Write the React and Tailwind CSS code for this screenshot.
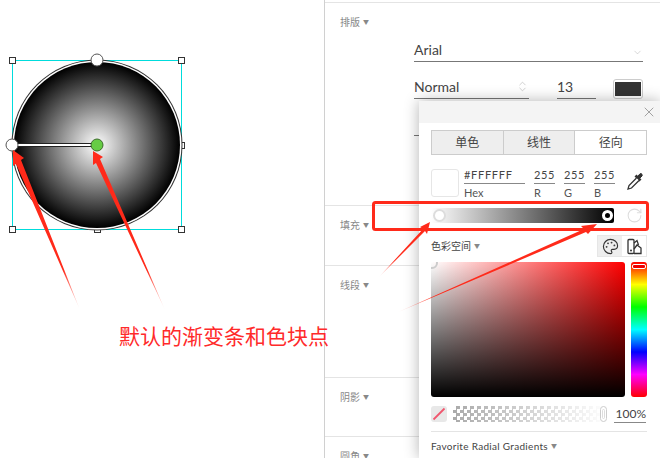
import React from 'react';
import { X, ChevronDown, ChevronsUpDown, RotateCw, Palette } from 'lucide-react';

const cjk = 'font-["Lato","Noto_Sans_CJK_SC",sans-serif]';

const Caret = () => <span className="ml-[3px] text-[6px] text-[#888]">▼</span>;

const Section = ({ label, className }) => (
  <div className={`border-b border-[#e4e4e4] pl-[15px] ${className}`}>
    <div className="flex items-center text-[10px] leading-none text-[#888]">
      {label}
      <Caret />
    </div>
  </div>
);

const Canvas = () => (
  <div className="relative h-full w-[324px] shrink-0">
    <svg className="absolute inset-0" width="324" height="458">
      <defs>
        <radialGradient id="radial">
          <stop offset="0%" stopColor="#fff" />
          <stop offset="100%" stopColor="#000" />
        </radialGradient>
      </defs>
      <rect x="12.5" y="60.5" width="169" height="169" fill="none" stroke="#00dcdc" />
      <rect x="94.5" y="226.5" width="6" height="6" fill="#fff" stroke="#333" />
      <rect x="178.5" y="142.5" width="6" height="6" fill="#fff" stroke="#333" />
      <circle cx="97" cy="145" r="85.5" fill="#333" />
      <circle cx="97" cy="145" r="84.5" fill="#fff" />
      <circle cx="97" cy="145" r="83" fill="url(#radial)" />
      {[[12.5, 60.5], [181.5, 60.5], [12.5, 229.5], [181.5, 229.5]].map(([x, y]) => (
        <rect key={x + '-' + y} x={x - 3} y={y - 3} width="6" height="6" fill="#fff" stroke="#333" />
      ))}
      <rect x="12.5" y="143.5" width="85" height="3" fill="#fff" stroke="#222" strokeWidth="1" />
      <circle cx="97" cy="60" r="6" fill="#fff" stroke="#555" />
      <circle cx="12" cy="145" r="6" fill="#fff" stroke="#555" />
      <circle cx="97" cy="145" r="6" fill="#66cc44" stroke="#3d6b2c" />
    </svg>
  </div>
);

const Popup = () => (
  <div className="absolute left-[419px] top-[101px] h-[357px] w-[241px] bg-white text-[#444] shadow-[0_0_14px_rgba(0,0,0,0.3)]">
    <div className="flex h-[22px] items-center justify-end bg-[#f4f4f4] pr-[3px]">
      <X size={16} strokeWidth={1} className="text-[#777]" />
    </div>
    <div className="pl-[12px] pr-[13px] pt-[7px]">
      <div className="flex h-[25px] border border-[#ccc] text-[12px] leading-none">
        <div className="flex flex-1 items-center justify-center border-r border-[#ccc] bg-[#eee]">单色</div>
        <div className="flex flex-1 items-center justify-center border-r border-[#ccc] bg-[#eee]">线性</div>
        <div className="flex flex-1 items-center justify-center">径向</div>
      </div>

      <div className="mt-[14px] flex h-[28px]">
        <div className="h-[28px] w-[28px] rounded-[3px] border border-[#e6e6e6] bg-white" />
        <div className="ml-[5px] w-[61px] text-[11px] leading-none">
          <div className="flex h-[15px] items-center border-b border-[#888] pb-[3px] tracking-[0.7px]">#FFFFFF</div>
          <div className="mt-[3px] text-[#555]">Hex</div>
        </div>
        {['R', 'G', 'B'].map((c) => (
          <div key={c} className="ml-[9px] w-[21px] text-[11px] leading-none">
            <div className="flex h-[15px] items-center border-b border-[#888] pb-[3px] tracking-[0.6px]">255</div>
            <div className="mt-[3px] text-[#555]">{c}</div>
          </div>
        ))}
        <svg className="ml-[11px] mt-[3px]" width="18" height="19" viewBox="0 0 18 19">
          <path d="M10.5 3.5 L14.5 7.5 L13.5 8.5 L9.5 4.5 Z" fill="#333" stroke="#333" strokeWidth="1.4" />
          <path d="M12 4 L14 1.8 C15 0.8 17 2.6 16 4 L14 6 Z" fill="#333" stroke="#333" />
          <path d="M10.5 6 L3 13.5 L2 17 L5.5 16 L13 8.5" fill="#fff" stroke="#333" strokeWidth="1.3" />
        </svg>
      </div>

      <div className="mt-[11px] flex h-[15px] items-center">
        <div className="relative h-[15px] w-[183px] rounded-[2px] bg-[linear-gradient(to_right,#fff,#000)]">
          <div className="absolute left-[2px] top-[1px] h-[13px] w-[13px] rounded-full border-2 border-[#ddd] bg-white" />
          <div className="absolute right-[1px] top-[2px] h-[11px] w-[11px] rounded-full border-[3px] border-white bg-black" />
        </div>
        <RotateCw size={17} strokeWidth={1.5} className="ml-[12px] text-[#ddd]" />
      </div>

      <div className="mt-[12px] flex h-[22px] items-center justify-between">
        <div className="flex items-center text-[10px] leading-none">
          色彩空间
          <Caret />
        </div>
        <div className="flex h-[22px] w-[50px] border border-[#e6e6e6]">
          <div className="flex w-[24px] items-center justify-center bg-[#eee]">
            <Palette size={17} strokeWidth={1.6} className="text-[#333]" />
          </div>
          <div className="flex flex-1 items-center justify-center">
            <svg width="17" height="17" viewBox="0 0 17 17" fill="none" stroke="#333" strokeWidth="1.3">
              <rect x="2" y="1.5" width="6" height="14" rx="1" />
              <path d="M8 5 L11 2.5 L12.5 7 M8 15.5 L15 15.5 L15 10 L11 7 L8 11" />
              <circle cx="5" cy="12.5" r="1" fill="#333" stroke="none" />
            </svg>
          </div>
        </div>
      </div>

      <div className="mt-[5px] flex h-[135px] gap-[6px]">
        <div className="relative w-[194px] overflow-hidden rounded-[3px] bg-[linear-gradient(to_bottom,transparent,#000),linear-gradient(to_right,#fff,#f00)]">
          <div className="absolute left-[-5px] top-[-5px] h-[12px] w-[12px] rounded-full border-2 border-[#ccc]" />
        </div>
        <div className="relative flex-1 rounded-[3px] bg-[linear-gradient(to_bottom,#f00,#ff0,#0f0,#0ff,#00f,#f0f,#f00)]">
          <div className="absolute left-[1px] right-[1px] top-[2px] h-[5px] rounded-[2px] border border-white bg-[#e00]" />
        </div>
      </div>

      <div className="mt-[8px] flex h-[17px] items-center">
        <div className="relative h-[16px] w-[16px] overflow-hidden rounded-[3px] bg-[#e8e8e8]">
          <svg width="16" height="16" className="absolute inset-0">
            <path d="M2.5 13.5 L13.5 2.5" stroke="#f0566e" strokeWidth="1.8" />
          </svg>
        </div>
        <div className="relative ml-[6px] h-[16px] w-[154px] bg-[repeating-conic-gradient(#aaa_0_25%,#fff_0_50%)] bg-[length:7px_7px]">
          <div className="absolute inset-0 bg-[linear-gradient(to_right,rgba(255,255,255,0),#fff)]" />
          <div className="absolute right-0 top-0 h-[16px] w-[7px] rounded-[4px] border border-[#ccc] bg-white">
            <div className="mx-auto mt-[2px] h-[10px] w-[3px] rounded-[2px] border border-[#ddd]" />
          </div>
        </div>
        <div className="ml-[7px] mt-[1px] flex h-[18px] w-[32px] items-center justify-end border-b border-[#888] text-[12px] leading-none">100%</div>
      </div>

      <div className="mt-[9px] border-t border-[#e4e4e4] pt-[9px]">
        <div className="flex items-center text-[10px] leading-none tracking-[0.3px]">
          Favorite Radial Gradients
          <Caret />
        </div>
      </div>
    </div>
  </div>
);

const Marks = () => (
  <svg className="pointer-events-none absolute inset-0" width="660" height="458">
    <defs>
      <linearGradient id="fadeA" x1="80" y1="310" x2="13" y2="150" gradientUnits="userSpaceOnUse">
        <stop offset="0" stopColor="#ff2a1a" stopOpacity="0" />
        <stop offset="0.25" stopColor="#ff2a1a" />
      </linearGradient>
      <linearGradient id="fadeB" x1="165" y1="310" x2="93" y2="151" gradientUnits="userSpaceOnUse">
        <stop offset="0" stopColor="#ff2a1a" stopOpacity="0" />
        <stop offset="0.25" stopColor="#ff2a1a" />
      </linearGradient>
      <linearGradient id="fadeC" x1="379" y1="277" x2="430" y2="222" gradientUnits="userSpaceOnUse">
        <stop offset="0" stopColor="#ff2a1a" stopOpacity="0" />
        <stop offset="0.3" stopColor="#ff2a1a" />
      </linearGradient>
      <linearGradient id="fadeD" x1="396" y1="313" x2="597" y2="224" gradientUnits="userSpaceOnUse">
        <stop offset="0" stopColor="#ff2a1a" stopOpacity="0" />
        <stop offset="0.2" stopColor="#ff2a1a" />
      </linearGradient>
    </defs>
    <rect x="373.5" y="202.5" width="274" height="27" rx="2" fill="none" stroke="#ff2a1a" strokeWidth="3" />
    <path d="M13 150 L24 158 L21 160 L80 310 L16 164 L13 166 Z" fill="url(#fadeA)" />
    <path d="M93 151 L103 157 L100 159 L165 310 L96 163 L93 165 Z" fill="url(#fadeB)" />
    <path d="M430 222 L420 227 L423 229 L379 277 L425 231 L427 234 Z" fill="url(#fadeC)" />
    <path d="M597 224 L581 226 L584 229 L396 313 L586 232 L588 234 Z" fill="url(#fadeD)" />
  </svg>
);

export default function App() {
  return (
    <div className={`relative flex h-[458px] w-[660px] overflow-hidden bg-white ${cjk}`}>
      <Canvas />
      <div className="flex h-full flex-1 flex-col border-l border-[#d0d0d0]">
        <div className="h-[3px] shrink-0 border-b border-[#e4e4e4]" />
        <div className="h-[203px] shrink-0 border-b border-[#e4e4e4] pl-[15px] pt-[14px]">
          <div className="flex items-center text-[10px] leading-none text-[#888]">
            排版
            <Caret />
          </div>
          <div className="ml-[74px] mt-[10px] w-[229px] text-[14px] text-[#444]">
            <div className="flex h-[25px] items-center justify-between border-b border-[#777]">
              Arial
              <ChevronDown size={11} strokeWidth={1} className="mt-[6px] text-[#aaa]" />
            </div>
            <div className="mt-[12px] flex items-end">
              <div className="flex h-[25px] w-[115px] items-center justify-between border-b border-[#777]">
                Normal
                <ChevronsUpDown size={13} strokeWidth={1} className="text-[#aaa]" />
              </div>
              <div className="ml-[28px] flex h-[25px] w-[39px] items-center border-b border-[#777]">13</div>
              <div className="ml-[17px] flex h-[20px] w-[30px] items-center justify-center rounded-[3px] border border-[#ccc]">
                <div className="h-[14px] w-[26px] bg-[#333]" />
              </div>
            </div>
            <div className="mt-[12px] h-[25px] border-b border-[#777]" />
          </div>
        </div>
        <Section label="填充" className="h-[60px] shrink-0 pt-[14px]" />
        <Section label="线段" className="h-[112px] shrink-0 pt-[14px]" />
        <Section label="阴影" className="h-[59px] shrink-0 pt-[14px]" />
        <div className="flex-1 pl-[15px] pt-[14px]">
          <div className="flex items-center text-[10px] leading-none text-[#888]">
            圆角
            <Caret />
          </div>
        </div>
      </div>
      <Popup />
      <Marks />
      <div className="absolute left-[119px] top-[321px] text-[21px] leading-[30px] text-[#ff2a2a]">默认的渐变条和色块点</div>
    </div>
  );
}
